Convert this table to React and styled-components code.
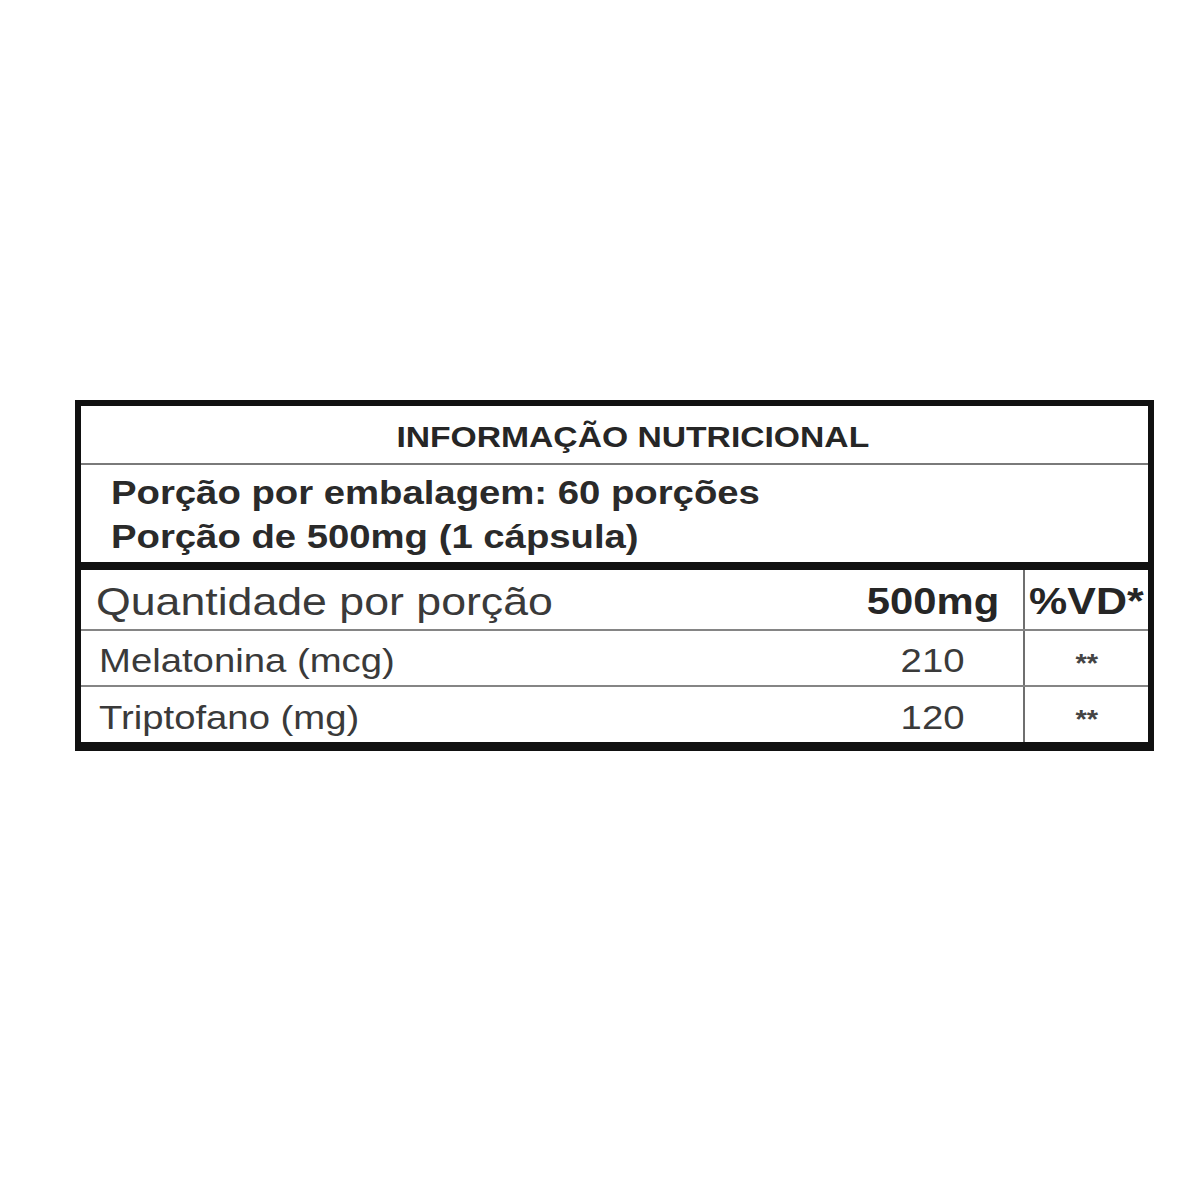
import React from "react";
import styled, { createGlobalStyle } from "styled-components";

const GlobalStyle = createGlobalStyle`
  html, body {
    margin: 0;
    padding: 0;
    background: #ffffff;
  }
  body {
    font-family: "Liberation Sans", Arial, sans-serif;
    color: #333333;
  }
`;

const S = {
  Page: styled.main`
    padding: 400px 46px 0 75px;
    min-height: 1200px;
    box-sizing: border-box;
  `,
  Label: styled.section`
    width: 1079px;
    box-sizing: border-box;
    border-style: solid;
    border-color: #111111;
    border-width: 6px 6px 9px 6px;
    background: #ffffff;
  `,
  TitleRow: styled.header`
    height: 59px;
    box-sizing: border-box;
    border-bottom: 2px solid #7a7a7a;
    display: flex;
    align-items: center;
    justify-content: center;
    padding: 6px 0 0 36px;
  `,
  Title: styled.h1`
    margin: 0;
    font-size: 29px;
    font-weight: 700;
    line-height: 51px;
    color: #262626;
  `,
  Serving: styled.div`
    height: 97px;
    box-sizing: border-box;
    padding: 6px 0 0 30px;
    display: flex;
    flex-direction: column;
  `,
  ServingLine: styled.p`
    margin: 0;
    font-size: 33px;
    font-weight: 700;
    line-height: 44px;
    color: #2a2a2a;
    white-space: nowrap;
  `,
  Table: styled.div`
    border-top: 8px solid #111111;
    display: flex;
    flex-direction: column;
  `,
  Row: styled.div`
    display: grid;
    grid-template-columns: 1fr 180px 125px;
    height: ${(p) => p.$height}px;
    box-sizing: content-box;
    border-bottom: ${(p) => (p.$last ? "none" : "2px solid #858585")};
  `,
  NameCell: styled.div`
    display: flex;
    align-items: center;
    padding-left: ${(p) => (p.$head ? 15 : 18)}px;
    padding-top: ${(p) => (p.$head ? 5 : 6)}px;
    font-size: ${(p) => (p.$head ? 38.5 : 33)}px;
    color: #3a3a3a;
    white-space: nowrap;
  `,
  ValueCell: styled.div`
    display: flex;
    align-items: center;
    justify-content: center;
    padding-top: ${(p) => (p.$head ? 5 : 6)}px;
    font-size: ${(p) => (p.$head ? 36 : 33)}px;
    font-weight: ${(p) => (p.$head ? 700 : 400)};
    color: ${(p) => (p.$head ? "#262626" : "#3a3a3a")};
  `,
  VdCell: styled.div`
    box-sizing: border-box;
    border-left: 2px solid #6f6f6f;
    display: flex;
    align-items: center;
    justify-content: center;
    padding-top: ${(p) => (p.$head ? 5 : 6)}px;
    font-size: ${(p) => (p.$head ? 37 : 25)}px;
    font-weight: 700;
    color: ${(p) => (p.$head ? "#262626" : "#444444")};
  `,
  Stretch: styled.span`
    display: inline-block;
    transform: translateY(${(p) => p.$shift || 0}px) scaleX(1.16);
    transform-origin: ${(p) => p.$origin || "left"} center;
  `,
};

const NUTRIENTS = [
  { name: "Melatonina (mcg)", value: "210", vd: "**", height: 54 },
  { name: "Triptofano (mg)", value: "120", vd: "**", height: 55 },
];

const App = () => {
  return (
    <>
      <GlobalStyle />
      <S.Page>
        <S.Label>
          <S.TitleRow>
            <S.Title>
              <S.Stretch $origin="center">INFORMAÇÃO NUTRICIONAL</S.Stretch>
            </S.Title>
          </S.TitleRow>
          <S.Serving>
            <S.ServingLine>
              <S.Stretch>Porção por embalagem: 60 porções</S.Stretch>
            </S.ServingLine>
            <S.ServingLine>
              <S.Stretch>Porção de 500mg (1 cápsula)</S.Stretch>
            </S.ServingLine>
          </S.Serving>
          <S.Table>
            <S.Row $height={59}>
              <S.NameCell $head>
                <S.Stretch>Quantidade por porção</S.Stretch>
              </S.NameCell>
              <S.ValueCell $head>
                <S.Stretch $origin="center">500mg</S.Stretch>
              </S.ValueCell>
              <S.VdCell $head>
                <S.Stretch $origin="center">%VD*</S.Stretch>
              </S.VdCell>
            </S.Row>
            {NUTRIENTS.map((item, index) => (
              <S.Row
                key={item.name}
                $height={item.height}
                $last={index === NUTRIENTS.length - 1}
              >
                <S.NameCell>
                  <S.Stretch>{item.name}</S.Stretch>
                </S.NameCell>
                <S.ValueCell>
                  <S.Stretch $origin="center">{item.value}</S.Stretch>
                </S.ValueCell>
                <S.VdCell>
                  <S.Stretch $origin="center" $shift={2}>
                    {item.vd}
                  </S.Stretch>
                </S.VdCell>
              </S.Row>
            ))}
          </S.Table>
        </S.Label>
      </S.Page>
    </>
  );
};

export default App;
